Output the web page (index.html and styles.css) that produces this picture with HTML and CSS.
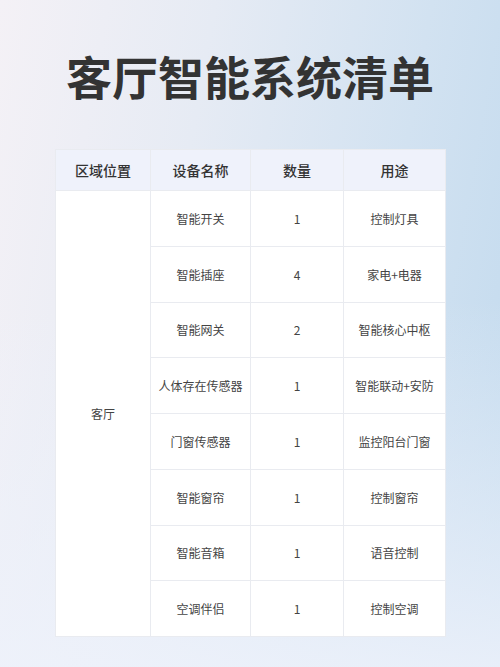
FILE: index.html
```html
<!DOCTYPE html>
<html lang="zh">
<head>
<meta charset="utf-8">
<link rel="stylesheet" href="styles.css">
</head>
<body>
<div class="page">
  <h1 class="title">客厅智能系统清单</h1>
  <table class="list">
    <colgroup>
      <col class="c1"><col class="c2"><col class="c3"><col class="c4">
    </colgroup>
    <thead>
      <tr><th>区域位置</th><th>设备名称</th><th>数量</th><th>用途</th></tr>
    </thead>
    <tbody>
      <tr><td rowspan="8">客厅</td><td>智能开关</td><td>1</td><td>控制灯具</td></tr>
      <tr><td>智能插座</td><td>4</td><td>家电+电器</td></tr>
      <tr><td>智能网关</td><td>2</td><td>智能核心中枢</td></tr>
      <tr><td>人体存在传感器</td><td>1</td><td>智能联动+安防</td></tr>
      <tr><td>门窗传感器</td><td>1</td><td>监控阳台门窗</td></tr>
      <tr><td>智能窗帘</td><td>1</td><td>控制窗帘</td></tr>
      <tr><td>智能音箱</td><td>1</td><td>语音控制</td></tr>
      <tr><td>空调伴侣</td><td>1</td><td>控制空调</td></tr>
    </tbody>
  </table>
</div>
</body>
</html>
```
FILE: styles.css
```css
html, body {
  margin: 0;
  padding: 0;
}
body {
  width: 500px;
  height: 667px;
  overflow: hidden;
  font-family: "Noto Sans CJK SC", "Noto Sans", sans-serif;
}
.page {
  width: 500px;
  height: 667px;
  box-sizing: border-box;
  padding-top: 52px;
  background:
    linear-gradient(to bottom, rgba(238,242,251,0) 0%, rgba(238,242,251,0) 45%, rgba(238,242,251,0.85) 100%),
    linear-gradient(100deg, #f4f1f6 0%, #e6ebf4 35%, #d2e2f1 70%, #c2daee 100%);
}
.title {
  margin: 0;
  text-align: center;
  font-size: 46px;
  line-height: 46px;
  font-weight: 700;
  color: #333333;
  letter-spacing: 0;
}
.list {
  margin: 51px 0 0 55px;
  width: 390px;
  border-collapse: collapse;
  table-layout: fixed;
  background: #ffffff;
}
.c1 { width: 95px; }
.c2 { width: 100px; }
.c3 { width: 93px; }
.c4 { width: 102px; }
.list th, .list td {
  border: 1px solid #e9ebf0;
  text-align: center;
  vertical-align: middle;
  padding: 0;
}
.list th {
  height: 40px;
  background: #eff2fb;
  font-size: 14px;
  font-weight: 500;
  color: #333333;
}
.list td {
  height: 54.75px;
  font-size: 12px;
  color: #444444;
}
```
